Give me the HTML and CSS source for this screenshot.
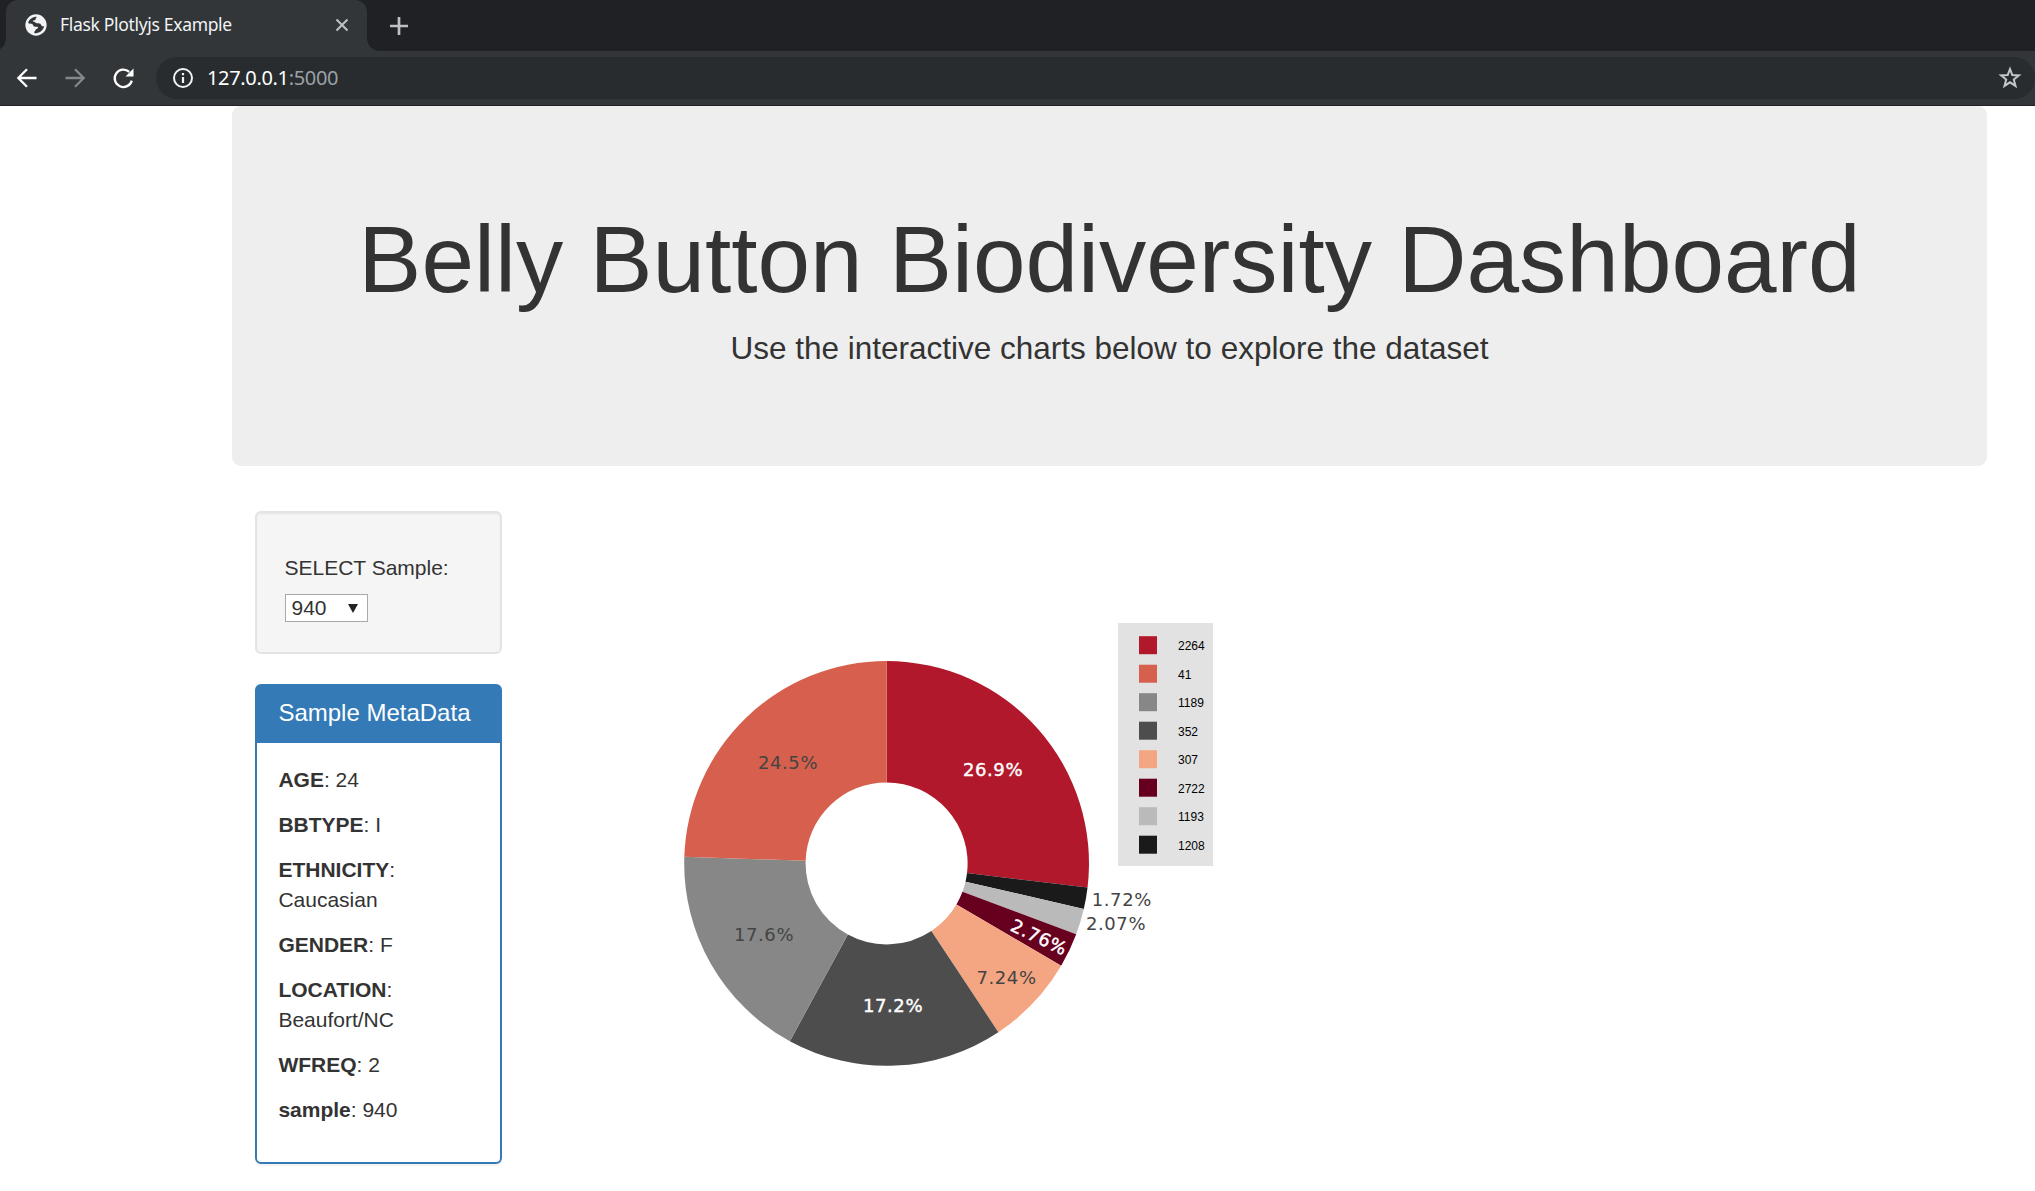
FILE: index.html
```html
<!DOCTYPE html>
<html lang="en">
<head>
<meta charset="utf-8">
<title>Flask Plotlyjs Example</title>
<link rel="stylesheet" href="styles.css">
</head>
<body>
<header class="browser">
  <div class="tabstrip">
    <div class="tab">
      <svg class="favicon" viewBox="0 0 24 24"><circle cx="12" cy="12" r="11.6" fill="#f1f3f4"/><path d="M12.500 3C8.500 3 4.500 5.500 3.400 9.800c1.600 1.300 3 .4 4.400 1.200 1.600.9 1 2.900 3 2.900h3.100c.6 1 .2 2-.9 2.300-1.800.4-1.200 2.200-2.600 2.800-.6.4-.5 1.400.2 1.900 5.200.5 9.600-3 10.200-7.700-1.700.6-2.700-.2-3.300-1.500-.8-1.700-2.700-1.500-4.700-1.600-1.900-.1-1.900-1.700-3.700-1.800-.8-.1-.8-1.100.1-1.300 1.700-.2 2.400-.6 2.500-1.900.1-.9 1.300-1.100.8-2.100z" fill="#323639"/></svg>
      <span class="tab-title">Flask Plotlyjs Example</span>
      <svg class="tab-close" viewBox="0 0 14 14"><path d="M1.500 1.500l11 11M12.500 1.500l-11 11" stroke="#bdc1c6" stroke-width="2.100"/></svg>
    </div>
    <svg class="new-tab" viewBox="0 0 18 18"><path d="M9 0v18M0 9h18" stroke="#bdc1c6" stroke-width="2.700"/></svg>
  </div>
  <div class="toolbar">
    <svg class="nav" viewBox="0 0 20 20"><path d="M19.500 10H1.500M10 1.200L1.300 10l8.700 8.800" fill="none" stroke="#fff" stroke-width="2.300"/></svg>
    <svg class="nav" viewBox="0 0 20 20"><path d="M.5 10h18M10 1.200l8.700 8.800-8.700 8.800" fill="none" stroke="#85888b" stroke-width="2.300"/></svg>
    <svg class="nav" viewBox="0 0 20 20"><path d="M18.800 12.600A8.700 8.700 0 1 1 16.200 3.800" fill="none" stroke="#fff" stroke-width="2.300"/><path d="M20.500 .5v8h-8z" fill="#fff"/></svg>
    <div class="omnibox">
      <svg class="info" viewBox="0 0 20 20"><circle cx="10" cy="10" r="9" fill="none" stroke="#f1f3f4" stroke-width="2"/><path d="M10 5v2.200M10 9v6" stroke="#f1f3f4" stroke-width="2.200"/></svg>
      <span class="url">127.0.0.1<span class="port">:5000</span></span>
      <svg class="star" viewBox="0 0 24 24"><path d="M12 3l2.300 6.100 6.600.3-5.100 4.100 1.700 6.400L12 16.300l-5.500 3.600 1.700-6.400-5.100-4.100 6.600-.3z" fill="none" stroke="#c3c6ca" stroke-width="2"/></svg>
    </div>
  </div>
</header>
<main class="container">
  <section class="jumbotron">
    <h1>Belly Button Biodiversity Dashboard</h1>
    <p>Use the interactive charts below to explore the dataset</p>
  </section>
  <div class="row">
    <aside class="sidebar">
      <div class="well">
        <h5>SELECT Sample:</h5>
        <div class="select"><span>940</span><svg class="caret" viewBox="0 0 10 9"><path d="M0 0h10L5 9z" fill="#222"/></svg></div>
      </div>
      <div class="panel">
        <h3>Sample MetaData</h3>
        <div class="panel-body">
          <p><b>AGE</b>: 24</p>
          <p><b>BBTYPE</b>: I</p>
          <p><b>ETHNICITY</b>: Caucasian</p>
          <p><b>GENDER</b>: F</p>
          <p><b>LOCATION</b>: Beaufort/NC</p>
          <p><b>WFREQ</b>: 2</p>
          <p><b>sample</b>: 940</p>
        </div>
      </div>
    </aside>
    <svg class="chart" id="pie" viewBox="547 511 800 654"></svg>
  </div>
</main>
<script src="chart.js"></script>
</body>
</html>
```
FILE: styles.css
```css
* { box-sizing: border-box; }
body {
  margin: 0;
  height: 1191px;
  overflow: hidden;
  background: #fff;
  color: #333;
  font: 21px/30px "Liberation Sans", Arial, sans-serif;
}
svg { display: block; flex: none; overflow: visible; }
.browser {
  height: 106px;
  background: #323639;
  border-bottom: 1px solid #202124;
  font-family: "Noto Sans", "Open Sans", sans-serif;
}
.tabstrip {
  display: flex;
  align-items: center;
  height: 51px;
  padding-left: 6px;
  background: #202124;
}
.tab {
  position: relative;
  display: flex;
  align-items: center;
  width: 361px;
  height: 51px;
  padding: 0 18px 1px 19px;
  background: #323639;
  border-radius: 12px 12px 0 0;
}
.tab::before, .tab::after {
  content: "";
  position: absolute;
  bottom: 0;
  width: 12px;
  height: 12px;
}
.tab::before { left: -12px; background: radial-gradient(circle at 0 0, #202124 11.5px, #323639 12px); }
.tab::after { right: -12px; background: radial-gradient(circle at 100% 0, #202124 11.5px, #323639 12px); }
.favicon { width: 22px; height: 22px; }
.tab-title {
  flex: 1;
  margin-left: 13px;
  padding-bottom: 2px;
  font-size: 17.5px;
  letter-spacing: -0.32px;
  color: #f1f3f4;
  white-space: nowrap;
}
.tab-close { width: 14px; height: 14px; }
.new-tab { width: 18px; height: 18px; margin-left: 23px; }
.toolbar {
  display: flex;
  align-items: center;
  height: 54px;
  padding-left: 17px;
}
.nav { width: 20px; height: 20px; margin-right: 28px; }
.omnibox {
  display: flex;
  align-items: center;
  flex: 1;
  height: 42px;
  margin-left: -5px;
  padding: 0 13px 0 17px;
  border-radius: 21px;
  background: #282c2f;
}
.info { width: 20px; height: 20px; }
.url { flex: 1; margin-left: 14px; font-size: 20px; letter-spacing: -0.34px; color: #fff; }
.port { color: #9aa0a6; }
.star { width: 24px; height: 24px; }
.container { width: 1755px; margin-left: 232px; }
.jumbotron {
  height: 360px;
  padding: 72px 90px;
  border-radius: 9px;
  background: #eee;
  text-align: center;
}
.jumbotron h1 {
  margin: 29px 0 15px;
  font-size: 94.5px;
  font-weight: 400;
  line-height: 104px;
  white-space: nowrap;
}
.jumbotron p { margin: 0; font-size: 31.5px; line-height: 44px; }
.row { display: flex; gap: 45px; margin-top: 45px; padding-left: 23px; }
.sidebar { width: 247px; }
.well {
  height: 143px;
  margin-bottom: 30px;
  padding: 43px 27.5px 0;
  border: 2px solid #e3e3e3;
  border-radius: 6px;
  background: #f5f5f5;
  box-shadow: inset 0 1.5px 1.5px rgba(0, 0, 0, .05);
}
h5 { margin: 0 0 15px; font-size: 21px; font-weight: 400; line-height: 23px; white-space: nowrap; }
.select {
  display: flex;
  align-items: center;
  justify-content: space-between;
  width: 83px;
  height: 28px;
  padding: 0 9px 0 6px;
  border: 1px solid #a9a9a9;
  background: #fff;
}
.caret { width: 10px; height: 9px; }
.panel { height: 480px; border: 2px solid #337ab7; border-radius: 6px; box-shadow: 0 1.5px 1.5px rgba(0, 0, 0, .05); }
h3 {
  height: 57px;
  margin: 0;
  padding: 13px 21.4px;
  background: #337ab7;
  color: #fff;
  font-size: 24px;
  font-weight: 400;
  line-height: 28px;
  white-space: nowrap;
}
.panel-body { padding: 22px 21.4px; }
.panel-body p { margin: 0 0 15px; }
.chart { width: 800px; height: 654px; }
.slice-label { font: 18px "DejaVu Sans", Verdana, sans-serif; letter-spacing: .6px; text-anchor: middle; }
.slice-label.light { fill: #fff; stroke: #fff; stroke-width: .4px; }
.legend-label { font: 12px "Liberation Sans", Arial, sans-serif; fill: #000; }
```
FILE: chart.js
```js
const CX = 886.6, CY = 863.4, R = 202.4, HOLE = 81;
// Slices run clockwise from twelve o'clock.
const slices = [
  { value: 78, color: '#b2182b', text: '26.9%', x: 993, y: 776, light: true },
  { value: 5, color: '#1a1a1a', text: '1.72%', x: 1121.800, y: 906 },
  { value: 6, color: '#bababa', text: '2.07%', x: 1116, y: 930 },
  { value: 8, color: '#67001f', text: '2.76%', x: 1039, y: 943.500, light: true, turn: 'rotate(25.4 1039 937.500)' },
  { value: 21, color: '#f4a582', text: '7.24%', x: 1006.500, y: 984 },
  { value: 50, color: '#4d4d4d', text: '17.2%', x: 893, y: 1012, light: true },
  { value: 51, color: '#878787', text: '17.6%', x: 764, y: 941 },
  { value: 71, color: '#d6604d', text: '24.5%', x: 788, y: 769 }
];
const legend = [
  ['2264', '#b2182b'], ['41', '#d6604d'], ['1189', '#878787'], ['352', '#4d4d4d'],
  ['307', '#f4a582'], ['2722', '#67001f'], ['1193', '#bababa'], ['1208', '#1a1a1a']
];
const total = slices.reduce((sum, s) => sum + s.value, 0);
const point = (r, t) => `${(CX + r * Math.sin(t)).toFixed(2)} ${(CY - r * Math.cos(t)).toFixed(2)}`;
let angle = 0, arcs = '', labels = '';
for (const s of slices) {
  const end = angle + s.value / total * 2 * Math.PI;
  arcs += `<path fill="${s.color}" d="M${point(R, angle)}A${R} ${R} 0 0 1 ${point(R, end)}L${point(HOLE, end)}A${HOLE} ${HOLE} 0 0 0 ${point(HOLE, angle)}Z"/>`;
  labels += `<text class="slice-label${s.light ? ' light' : ''}" x="${s.x}" y="${s.y}" fill="#444" transform="${s.turn || ''}">${s.text}</text>`;
  angle = end;
}
let key = '<rect x="1118" y="623" width="95" height="243" fill="#e2e2e2"/>';
legend.forEach(([name, color], i) => {
  const y = 636.2 + i * 28.5;
  key += `<rect x="1139" y="${y}" width="18" height="18" fill="${color}"/><text class="legend-label" x="1178" y="${y + 13.800}">${name}</text>`;
});
document.getElementById('pie').innerHTML = arcs + labels + key;
```
